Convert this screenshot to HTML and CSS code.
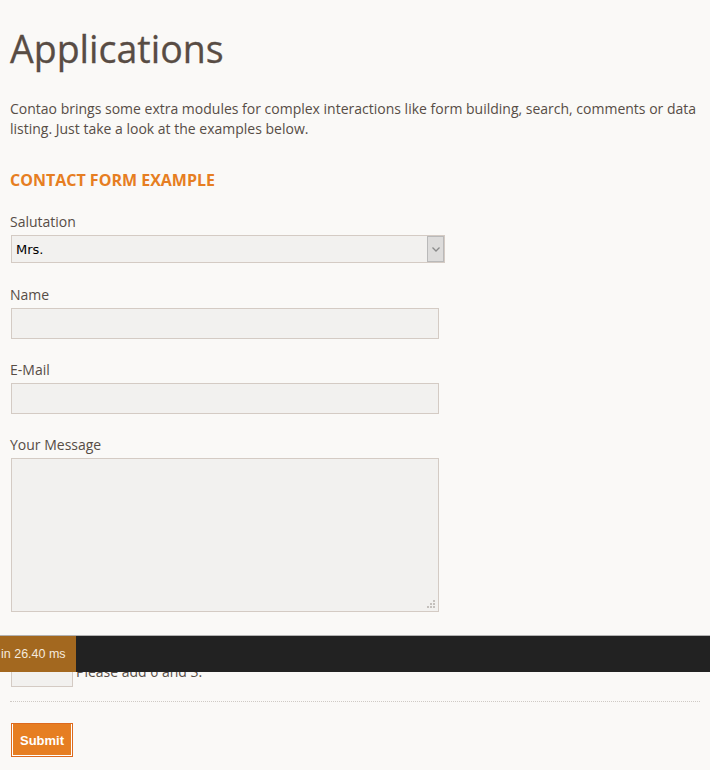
FILE: index.html
```html
<!DOCTYPE html>
<html lang="en">
<head>
<meta charset="utf-8">
<title>Applications</title>
<link rel="stylesheet" href="styles.css">
</head>
<body>
<div class="page">
  <h1 class="title">Applications</h1>
  <p class="intro">Contao brings some extra modules for complex interactions like form building, search, comments or data listing. Just take a look at the examples below.</p>
  <h2 class="section">CONTACT FORM EXAMPLE</h2>
  <form class="form">
    <div class="field field-select">
      <label class="label" for="sal">Salutation</label>
      <div class="select-wrap">
        <select id="sal" class="select"><option>Mrs.</option><option>Mr.</option></select>
        <span class="select-arrow"><svg width="8" height="5" viewBox="0 0 8 5"><path d="M0.5 0.5 L4 4 L7.5 0.5" fill="none" stroke="#8a8a8a" stroke-width="1.3"/></svg></span>
      </div>
    </div>
    <div class="field">
      <label class="label" for="name">Name</label>
      <input id="name" class="input" type="text">
    </div>
    <div class="field">
      <label class="label" for="email">E-Mail</label>
      <input id="email" class="input" type="text">
    </div>
    <div class="field">
      <label class="label" for="msg">Your Message</label>
      <div class="textarea-wrap">
        <textarea id="msg" class="textarea"></textarea>
        <svg class="grip" width="8" height="8" viewBox="0 0 8 8"><rect x="6" y="0" width="2" height="2"/><rect x="3" y="3" width="2" height="2"/><rect x="6" y="3" width="2" height="2"/><rect x="0" y="6" width="2" height="2"/><rect x="3" y="6" width="2" height="2"/><rect x="6" y="6" width="2" height="2"/></svg>
      </div>
    </div>
    <div class="field field-captcha">
      <label class="label" for="cap">Security question</label>
      <div class="captcha">
        <input id="cap" class="input input-small" type="text">
        <span class="captcha-text">Please add 6 and 3.</span>
      </div>
    </div>
    <div class="divider"></div>
    <button class="submit" type="button">Submit</button>
  </form>
</div>
<div class="debug-bar"><span class="debug-time">in 26.40 ms</span></div>
</body>
</html>
```
FILE: styles.css
```css
html, body {
  margin: 0;
  padding: 0;
  background: #faf9f7;
}
body {
  font-family: "Open Sans", "Liberation Sans", sans-serif;
  color: #574d46;
  font-size: 14px;
  line-height: 20px;
  position: relative;
  min-height: 770px;
}
.page {
  width: 690px;
  padding: 25px 10px 0 10px;
}
.title {
  margin: 0;
  font-size: 37.5px;
  line-height: 48px;
  font-weight: normal;
  color: #584c44;
  -webkit-text-stroke: 0.3px #584c44;
}
.intro {
  margin: 26px 0 0 0;
}
.section {
  margin: 31px 0 22px 0;
  font-size: 16px;
  line-height: 20px;
  font-weight: bold;
  color: #e67e22;
}
.form {
  margin: 0;
}
.field {
  margin-bottom: 21px;
}
.field-select {
  margin-bottom: 22px;
}
.label {
  display: block;
  margin-bottom: 3px;
}
.select-wrap {
  position: relative;
  margin-left: 1px;
  width: 434px;
  height: 28px;
}
.select {
  appearance: none;
  -webkit-appearance: none;
  display: block;
  width: 434px;
  height: 28px;
  margin: 0;
  padding: 0 0 0 4px;
  border: 1px solid #d4cbc4;
  background: #f2f1ef;
  font-family: "DejaVu Sans", sans-serif;
  font-size: 13px;
  color: #000;
  border-radius: 0;
  outline: none;
}
.select-arrow {
  position: absolute;
  top: 1px;
  right: 1px;
  width: 15px;
  height: 24px;
  border: 1px solid #b9b9b9;
  background: #dddcdb;
  display: flex;
  align-items: center;
  justify-content: center;
  pointer-events: none;
}
.input {
  display: block;
  box-sizing: border-box;
  margin: 0 0 0 1px;
  width: 428px;
  height: 31px;
  border: 1px solid #d4cbc4;
  background: #f2f1ef;
  padding: 0 4px;
  font-family: "Open Sans", sans-serif;
  font-size: 14px;
  border-radius: 0;
  outline: none;
}
.textarea-wrap {
  position: relative;
  margin-left: 1px;
  width: 428px;
  height: 154px;
}
.textarea {
  display: block;
  box-sizing: border-box;
  margin: 0;
  width: 428px;
  height: 154px;
  border: 1px solid #d4cbc4;
  background: #f2f1ef;
  resize: none;
  border-radius: 0;
  outline: none;
}
.grip {
  position: absolute;
  right: 4px;
  bottom: 4px;
  fill: #c4c0bc;
}
.captcha {
  display: flex;
  align-items: center;
  gap: 3px;
}
.input-small {
  width: 62px;
}
.field-captcha {
  margin-bottom: 14px;
}
.divider {
  border-top: 1px dotted #cfcac5;
  margin-bottom: 21px;
}
.submit {
  display: block;
  margin: 0 0 0 1px;
  width: 62px;
  height: 34px;
  padding: 0;
  border: 1px solid #dd6a1f;
  box-shadow: inset -1px -1px 0 #fff, inset 1px 0 0 #fff;
  background: #e67e22;
  color: #fff;
  font-family: "Liberation Sans", Arial, sans-serif;
  font-weight: bold;
  font-size: 13px;
  cursor: pointer;
}
.debug-bar {
  position: absolute;
  left: 0;
  right: 0;
  top: 635px;
  height: 36px;
  border-top: 1px solid #b2b2b2;
  background: #222;
  display: flex;
}
.debug-time {
  display: block;
  width: 75px;
  background: #a3681f;
  color: #f4eadd;
  font-family: "Liberation Sans", Arial, sans-serif;
  font-size: 12.5px;
  line-height: 36px;
  white-space: nowrap;
  overflow: hidden;
  padding-left: 1px;
}
```
